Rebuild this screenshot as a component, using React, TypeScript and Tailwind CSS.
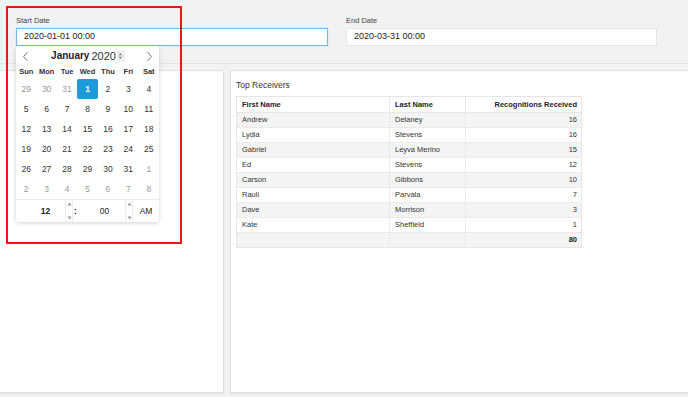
import { ReactNode } from 'react';

const FONT = "font-['Liberation_Sans',Arial,sans-serif]";

const receivers = [
  { first: 'Andrew', last: 'Delaney', count: 16 },
  { first: 'Lydia', last: 'Stevens', count: 16 },
  { first: 'Gabriel', last: 'Leyva Merino', count: 15 },
  { first: 'Ed', last: 'Stevens', count: 12 },
  { first: 'Carson', last: 'Gibbons', count: 10 },
  { first: 'Rauli', last: 'Parvala', count: 7 },
  { first: 'Dave', last: 'Morrison', count: 3 },
  { first: 'Kate', last: 'Sheffield', count: 1 },
];

const weekDays = ['Sun', 'Mon', 'Tue', 'Wed', 'Thu', 'Fri', 'Sat'];

// January 2020 grid, muted = outside current month
const days: { d: number; muted?: boolean }[] = [
  { d: 29, muted: true },
  { d: 30, muted: true },
  { d: 31, muted: true },
  ...Array.from({ length: 31 }, (_, i) => ({ d: i + 1 })),
  ...Array.from({ length: 8 }, (_, i) => ({ d: i + 1, muted: true })),
];

export default function App() {
  return (
    <div className={`relative w-[688px] h-[397px] overflow-hidden bg-[#f2f2f2] ${FONT}`}>
      <div className="h-[64px] border-b border-[#e2e2e2] flex gap-[18px] px-4 pt-[16px]">
        <div className="relative w-[312px]">
          <DateField label="Start Date" value="2020-01-01 00:00" active />
          <CalendarPopup />
        </div>
        <div className="w-[311px]">
          <DateField label="End Date" value="2020-03-31 00:00" />
        </div>
      </div>

      <div className="flex gap-[6px] pt-[6px] h-[329px]">
        <div className="w-[224px] bg-white border-r border-b border-t border-[#e0e0e0] shadow-[0_1px_1px_rgba(0,0,0,0.06)]" />
        <div className="flex-1 bg-white border-l border-b border-t border-[#e0e0e0] shadow-[0_1px_1px_rgba(0,0,0,0.06)] pl-[5px] pt-[8px]">
          <p className="text-[8.5px] leading-[12px] text-[#333] mb-[5px]">Top Receivers</p>
          <ReceiversTable />
        </div>
      </div>

      {/* annotation box */}
      <div className="absolute left-[6px] top-[6px] w-[176px] h-[238px] border-[2px] border-[#f01414] pointer-events-none" />
    </div>
  );
}

function DateField({ label, value, active }: { label: string; value: string; active?: boolean }) {
  return (
    <div>
      <p className="text-[7.5px] leading-[10px] font-medium text-[#444] mb-[2px]">{label}</p>
      <div
        className={
          active
            ? 'h-[18px] bg-white border border-[#79b7e2] shadow-[0_0_1px_#9fcbea] pl-[7px] flex items-center text-[9px] text-[#222]'
            : 'h-[18px] bg-white border border-[#e6e6e6] pl-[7px] flex items-center text-[9px] text-[#222]'
        }
      >
        {value}
      </div>
    </div>
  );
}

function Chevron({ dir }: { dir: 'left' | 'right' }) {
  return (
    <svg width="7" height="11" viewBox="0 0 7 11" className="block">
      <polyline
        points={dir === 'left' ? '5.5,1 1.5,5.5 5.5,10' : '1.5,1 5.5,5.5 1.5,10'}
        fill="none"
        stroke="#777"
        strokeWidth="1"
      />
    </svg>
  );
}

function Spinner({ className }: { className?: string }) {
  return (
    <div className={`flex flex-col items-center justify-between ${className ?? ''}`}>
      <svg width="5" height="4" viewBox="0 0 5 4">
        <polygon points="2.5,0.5 4.5,3.5 0.5,3.5" fill="#999" />
      </svg>
      <svg width="5" height="4" viewBox="0 0 5 4">
        <polygon points="0.5,0.5 4.5,0.5 2.5,3.5" fill="#999" />
      </svg>
    </div>
  );
}

function CalendarPopup() {
  return (
    <div className="absolute left-0 top-[30px] w-[143px] h-[176px] bg-white rounded-[3px] shadow-[0_1px_4px_rgba(0,0,0,0.18)] flex flex-col z-10">
      <div className="h-[16px] mt-[2px] flex items-center justify-between px-[6px]">
        <Chevron dir="left" />
        <div className="flex items-center text-[#222]">
          <span className="text-[10px] font-bold leading-none">January</span>
          <span className="text-[11px] leading-none ml-[2px] text-[#333]">2020</span>
          <Spinner className="h-[10px] w-[6px] ml-[2px] border border-[#e4e4e4]" />
        </div>
        <Chevron dir="right" />
      </div>

      <div className="grid grid-cols-7 h-[15px] items-center text-center text-[7.5px] font-bold text-[#333]">
        {weekDays.map((w) => (
          <span key={w}>{w}</span>
        ))}
      </div>

      <div className="grid grid-cols-7 grid-rows-6 h-[120px] text-center text-[8.5px]">
        {days.map((day, i) => (
          <DayCell key={i} selected={i === 3} muted={day.muted}>
            {day.d}
          </DayCell>
        ))}
      </div>

      <div className="flex-1 flex items-stretch border-t border-[#ececec] text-[8.5px] text-[#222]">
        <div className="w-[49px] flex items-center justify-center pl-[10px] font-bold">12</div>
        <Spinner className="w-[8px] py-[2px] border-x border-[#ececec]" />
        <div className="w-[5px] flex items-center justify-center font-bold">:</div>
        <div className="w-[47px] flex items-center justify-center pl-[6px]">00</div>
        <Spinner className="w-[8px] py-[2px] border-x border-[#ececec]" />
        <div className="flex-1 flex items-center justify-center">AM</div>
      </div>
    </div>
  );
}

function DayCell({ children, selected, muted }: { children: ReactNode; selected?: boolean; muted?: boolean }) {
  if (selected) {
    return (
      <div className="flex items-center justify-center">
        <span className="w-[21px] h-[20px] flex items-center justify-center bg-[#1d9bd8] rounded-[2px] text-white font-bold">
          {children}
        </span>
      </div>
    );
  }
  return (
    <div className={`flex items-center justify-center ${muted ? 'text-[#9a9a9a]' : 'text-[#333]'}`}>
      {children}
    </div>
  );
}

function ReceiversTable() {
  const total = receivers.reduce((sum, r) => sum + r.count, 0);

  return (
    <table className="w-[345px] border-collapse border border-[#e6e6e6] text-[7.5px] text-[#333] table-fixed">
      <colgroup>
        <col className="w-[153px]" />
        <col className="w-[76px]" />
        <col className="w-[116px]" />
      </colgroup>
      <thead>
        <tr className="h-[16px] bg-white font-bold text-[#222]">
          <th className="text-left font-bold pl-[5px] border-r border-b border-[#e8e8e8]">First Name</th>
          <th className="text-left font-bold pl-[5px] border-r border-b border-[#e8e8e8]">Last Name</th>
          <th className="text-right font-bold pr-[4px] border-b border-[#e8e8e8]">Recognitions Received</th>
        </tr>
      </thead>
      <tbody>
        {receivers.map((r, i) => (
          <tr key={r.first} className={`h-[15px] ${i % 2 === 0 ? 'bg-[#f4f4f4]' : 'bg-white'}`}>
            <td className="pl-[5px] border-r border-b border-[#ebebeb]">{r.first}</td>
            <td className="pl-[5px] border-r border-b border-[#ebebeb]">{r.last}</td>
            <td className="text-right pr-[4px] border-b border-[#ebebeb]">{r.count}</td>
          </tr>
        ))}
        <tr className="h-[15px] bg-[#f4f4f4]">
          <td className="border-r border-[#ebebeb]" />
          <td className="border-r border-[#ebebeb]" />
          <td className="text-right pr-[4px] font-bold text-[#222]">{total}</td>
        </tr>
      </tbody>
    </table>
  );
}
